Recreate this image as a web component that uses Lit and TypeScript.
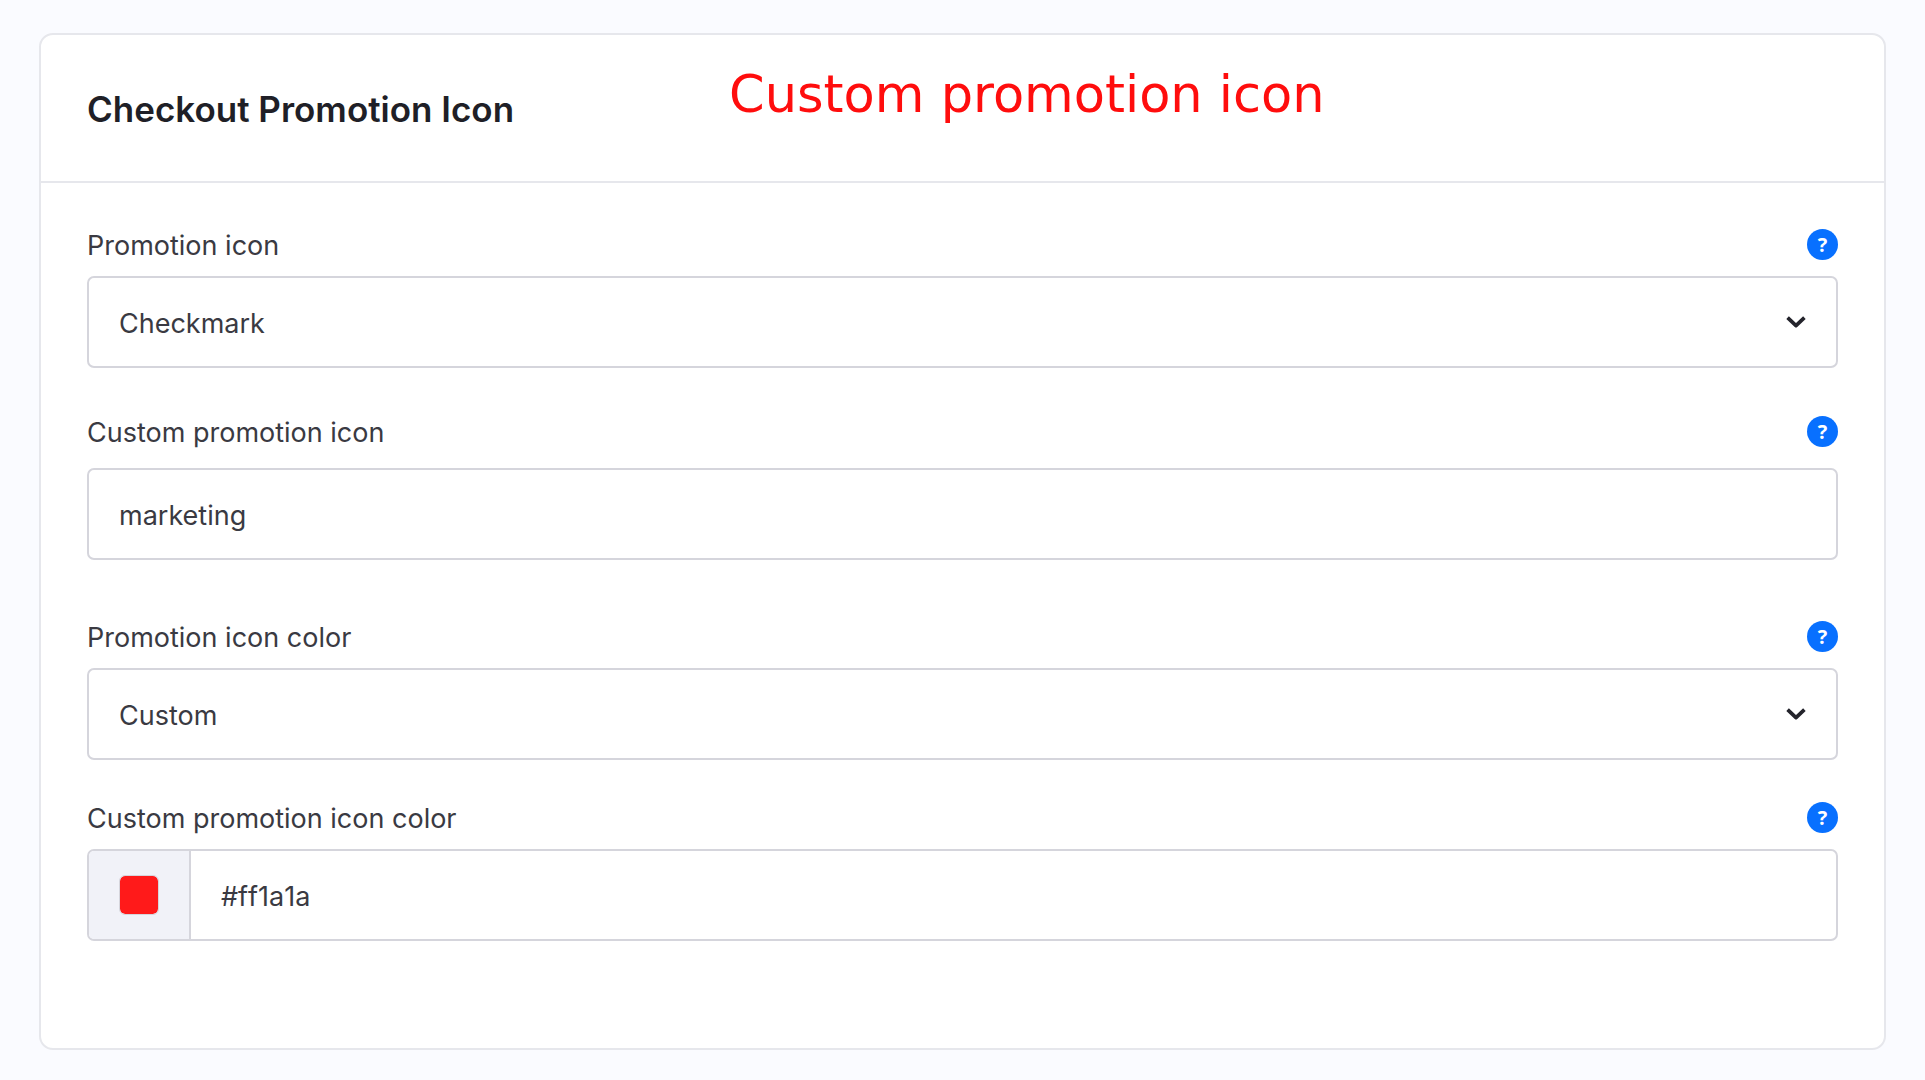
import { LitElement, html, css, svg, nothing } from "lit";
import { customElement, property, state } from "lit/decorators.js";

type FieldKind = "select" | "text" | "color";

interface Field {
  id: string;
  kind: FieldKind;
  label: string;
  value: string;
  options?: string[];
}

const FIELDS: Field[] = [
  { id: "promotion-icon", kind: "select", label: "Promotion icon", value: "Checkmark", options: ["Checkmark"] },
  { id: "custom-icon", kind: "text", label: "Custom promotion icon", value: "marketing" },
  { id: "icon-color", kind: "select", label: "Promotion icon color", value: "Custom", options: ["Custom"] },
  { id: "custom-color", kind: "color", label: "Custom promotion icon color", value: "#ff1a1a" },
];

const chevron = svg`<path d="M1.6 2.6 L10 10.6 L18.4 2.6" fill="none" stroke="#24242c" stroke-width="3.7" stroke-linejoin="round" stroke-linecap="butt"/>`;

@customElement("setting-field")
export class SettingField extends LitElement {
  @property({ attribute: false }) field!: Field;
  @state() private value = "";

  static styles = css`
    :host {
      display: block;
      color: #3a3a42;
      font-family: Inter, "Liberation Sans", sans-serif;
      font-size: 27px;
    }
    .head {
      display: flex;
      align-items: center;
      justify-content: space-between;
      height: 31px;
      margin-bottom: 16px;
    }
    .head.text {
      margin-bottom: 21px;
    }
    .label {
      line-height: 32px;
      padding-top: 3px;
    }
    .help {
      display: block;
      width: 31px;
      height: 31px;
      padding: 0;
      border: 0;
      border-radius: 50%;
      background: #0870ff;
      color: #fff;
      font: 700 20px/31px "Open Sans", sans-serif;
      text-align: center;
      cursor: pointer;
    }
    .control {
      box-sizing: border-box;
      display: grid;
      height: 92px;
      border: 2px solid #d5d5dc;
      border-radius: 7px;
      background: #fff;
      overflow: hidden;
    }
    .control.color {
      grid-template-columns: auto 1fr;
    }
    .control:focus-within {
      border-color: #0870ff;
    }
    .entry {
      box-sizing: border-box;
      grid-area: 1 / 1;
      width: 100%;
      min-width: 0;
      height: 88px;
      margin: 0;
      padding: 2px 30px 0;
      border: 0;
      outline: 0;
      background: transparent;
      color: inherit;
      font: inherit;
      appearance: none;
    }
    .color .entry {
      grid-area: 1 / 2;
      font-kerning: none;
    }
    .chevron {
      grid-area: 1 / 1;
      place-self: center end;
      width: 20px;
      height: 14px;
      margin-right: 30px;
      pointer-events: none;
    }
    .swatch-cell {
      display: grid;
      place-items: center;
      padding: 0 30px;
      border-right: 2px solid #d5d5dc;
      background: #f1f2f8;
    }
    .swatch {
      display: block;
      box-sizing: border-box;
      width: 40px;
      height: 40px;
      padding: 0;
      border: 1px solid #d5d5dc;
      border-radius: 6px;
      background: none;
      overflow: hidden;
      appearance: none;
      cursor: pointer;
    }
    .swatch::-webkit-color-swatch-wrapper {
      padding: 0;
    }
    .swatch::-webkit-color-swatch {
      border: 0;
      border-radius: 5px;
    }
  `;

  willUpdate(changed: Map<string, unknown>) {
    if (changed.has("field")) this.value = this.field.value;
  }

  private onInput(e: Event) {
    this.value = (e.target as HTMLInputElement).value;
  }

  private renderSelect() {
    return html`
      <select class="entry" id=${this.field.id}>
        ${this.field.options?.map((o) => html`<option ?selected=${o === this.field.value}>${o}</option>`)}
      </select>
      <svg class="chevron" viewBox="0 0 20 14" aria-hidden="true">${chevron}</svg>
    `;
  }

  private renderInput() {
    return html`
      ${this.field.kind === "color"
        ? html`<div class="swatch-cell">
            <input class="swatch" type="color" aria-label="Pick a color" .value=${this.value} @input=${this.onInput} />
          </div>`
        : nothing}
      <input class="entry" id=${this.field.id} type="text" .value=${this.value} @input=${this.onInput} />
    `;
  }

  render() {
    const { id, kind, label } = this.field;
    return html`
      <div class="head ${kind}">
        <label class="label" for=${id}>${label}</label>
        <button class="help" type="button" aria-label="Help">?</button>
      </div>
      <div class="control ${kind}">${kind === "select" ? this.renderSelect() : this.renderInput()}</div>
    `;
  }
}

@customElement("app-root")
export class AppRoot extends LitElement {
  static styles = css`
    :host {
      display: block;
      box-sizing: border-box;
      min-height: 100vh;
      padding: 33px 39px 29px;
      background: #fafbff;
      font-family: Inter, "Liberation Sans", sans-serif;
    }
    .card {
      border: 2px solid #e6e7ec;
      border-radius: 14px;
      background: #fff;
    }
    .header {
      display: flex;
      align-items: flex-start;
      gap: 215px;
      padding: 30px 46px 52px;
      border-bottom: 2px solid #e6e7ec;
    }
    .title {
      margin: 0;
      padding-top: 24px;
      color: #1f1f27;
      font-size: 35px;
      font-weight: 600;
      line-height: 40px;
      white-space: nowrap;
    }
    .note {
      margin: 0;
      color: #ff0d0d;
      font-family: "DejaVu Sans", sans-serif;
      font-size: 51px;
      line-height: 60px;
      white-space: nowrap;
    }
    .body {
      display: grid;
      padding: 46px 46px 107px;
    }
    .select + .text {
      margin-top: 48px;
    }
    .text + .select {
      margin-top: 61px;
    }
    .select + .color {
      margin-top: 42px;
    }
  `;

  render() {
    return html`
      <section class="card">
        <header class="header">
          <h2 class="title">Checkout Promotion Icon</h2>
          <p class="note">Custom promotion icon</p>
        </header>
        <form class="body" @submit=${(e: Event) => e.preventDefault()}>
          ${FIELDS.map((f) => html`<setting-field class=${f.kind} .field=${f}></setting-field>`)}
        </form>
      </section>
    `;
  }
}
